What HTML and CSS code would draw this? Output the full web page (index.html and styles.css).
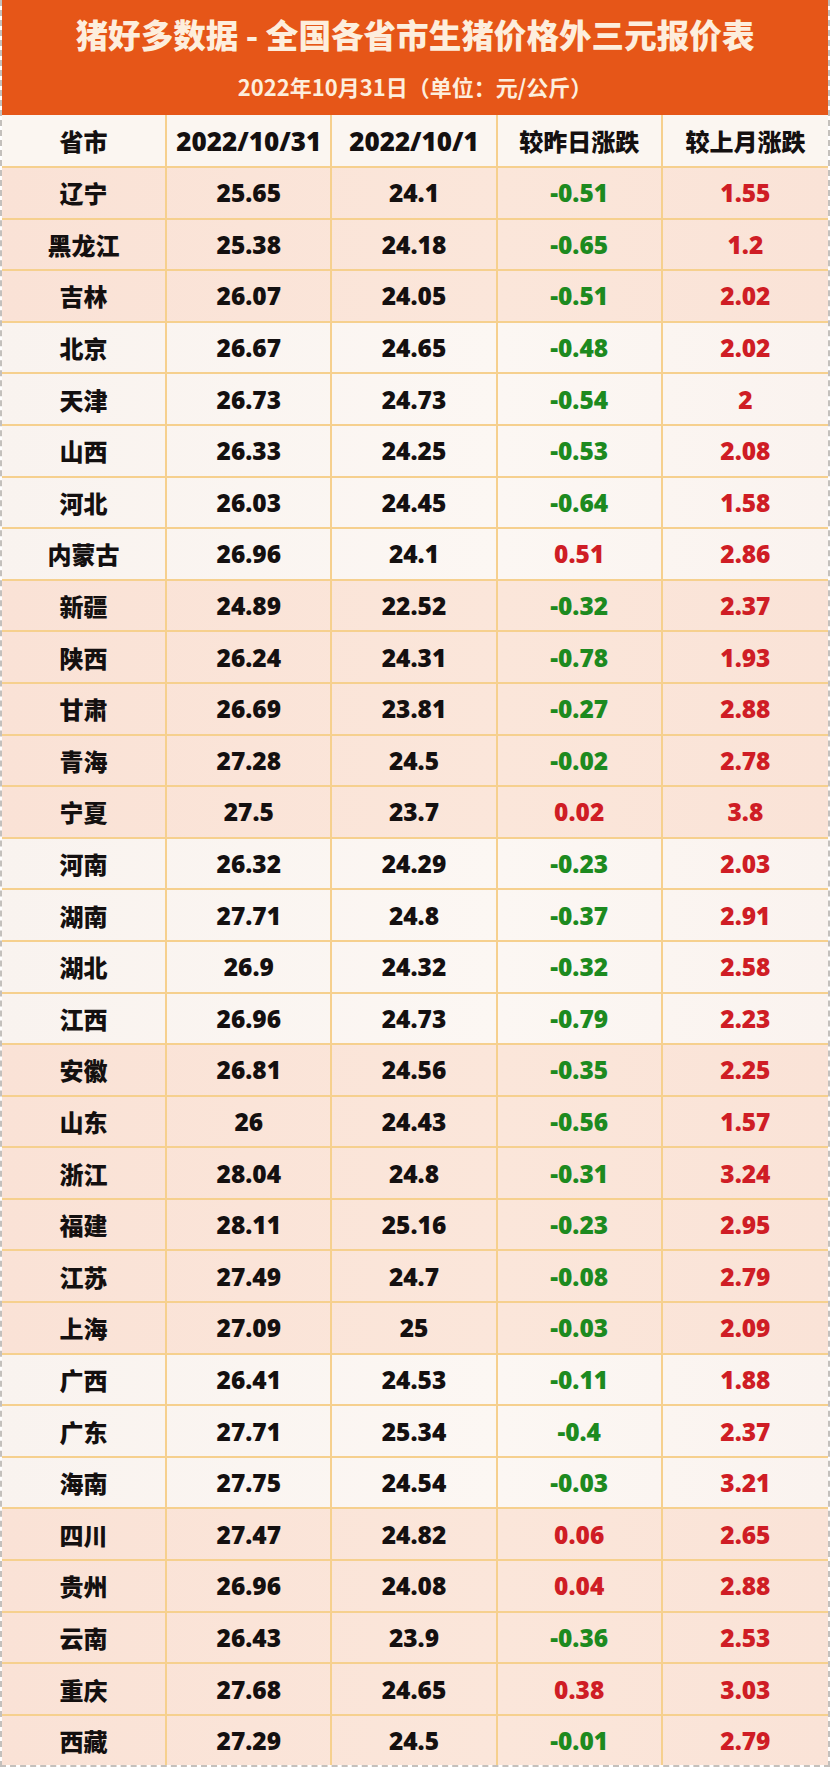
FILE: index.html
```html
<!DOCTYPE html>
<html lang="zh-CN">
<head>
<meta charset="utf-8">
<title>猪好多数据 - 全国各省市生猪价格外三元报价表</title>
<link rel="stylesheet" href="styles.css">
</head>
<body>
<div class="sheet">
  <header class="banner">
    <h1 class="title">猪好多数据 - 全国各省市生猪价格外三元报价表</h1>
    <p class="subtitle">2022年10月31日（单位：元/公斤）</p>
  </header>
  <div class="table">
    <div class="row head">
      <div class="cell">省市</div>
      <div class="cell date">2022/10/31</div>
      <div class="cell date">2022/10/1</div>
      <div class="cell">较昨日涨跌</div>
      <div class="cell">较上月涨跌</div>
    </div>
    <div class="row peach"><div class="cell name">辽宁</div><div class="cell num">25.65</div><div class="cell num">24.1</div><div class="cell num down">-0.51</div><div class="cell num up">1.55</div></div>
    <div class="row peach"><div class="cell name">黑龙江</div><div class="cell num">25.38</div><div class="cell num">24.18</div><div class="cell num down">-0.65</div><div class="cell num up">1.2</div></div>
    <div class="row peach"><div class="cell name">吉林</div><div class="cell num">26.07</div><div class="cell num">24.05</div><div class="cell num down">-0.51</div><div class="cell num up">2.02</div></div>
    <div class="row light"><div class="cell name">北京</div><div class="cell num">26.67</div><div class="cell num">24.65</div><div class="cell num down">-0.48</div><div class="cell num up">2.02</div></div>
    <div class="row light"><div class="cell name">天津</div><div class="cell num">26.73</div><div class="cell num">24.73</div><div class="cell num down">-0.54</div><div class="cell num up">2</div></div>
    <div class="row light"><div class="cell name">山西</div><div class="cell num">26.33</div><div class="cell num">24.25</div><div class="cell num down">-0.53</div><div class="cell num up">2.08</div></div>
    <div class="row light"><div class="cell name">河北</div><div class="cell num">26.03</div><div class="cell num">24.45</div><div class="cell num down">-0.64</div><div class="cell num up">1.58</div></div>
    <div class="row light"><div class="cell name">内蒙古</div><div class="cell num">26.96</div><div class="cell num">24.1</div><div class="cell num up">0.51</div><div class="cell num up">2.86</div></div>
    <div class="row peach"><div class="cell name">新疆</div><div class="cell num">24.89</div><div class="cell num">22.52</div><div class="cell num down">-0.32</div><div class="cell num up">2.37</div></div>
    <div class="row peach"><div class="cell name">陕西</div><div class="cell num">26.24</div><div class="cell num">24.31</div><div class="cell num down">-0.78</div><div class="cell num up">1.93</div></div>
    <div class="row peach"><div class="cell name">甘肃</div><div class="cell num">26.69</div><div class="cell num">23.81</div><div class="cell num down">-0.27</div><div class="cell num up">2.88</div></div>
    <div class="row peach"><div class="cell name">青海</div><div class="cell num">27.28</div><div class="cell num">24.5</div><div class="cell num down">-0.02</div><div class="cell num up">2.78</div></div>
    <div class="row peach"><div class="cell name">宁夏</div><div class="cell num">27.5</div><div class="cell num">23.7</div><div class="cell num up">0.02</div><div class="cell num up">3.8</div></div>
    <div class="row light"><div class="cell name">河南</div><div class="cell num">26.32</div><div class="cell num">24.29</div><div class="cell num down">-0.23</div><div class="cell num up">2.03</div></div>
    <div class="row light"><div class="cell name">湖南</div><div class="cell num">27.71</div><div class="cell num">24.8</div><div class="cell num down">-0.37</div><div class="cell num up">2.91</div></div>
    <div class="row light"><div class="cell name">湖北</div><div class="cell num">26.9</div><div class="cell num">24.32</div><div class="cell num down">-0.32</div><div class="cell num up">2.58</div></div>
    <div class="row light"><div class="cell name">江西</div><div class="cell num">26.96</div><div class="cell num">24.73</div><div class="cell num down">-0.79</div><div class="cell num up">2.23</div></div>
    <div class="row peach"><div class="cell name">安徽</div><div class="cell num">26.81</div><div class="cell num">24.56</div><div class="cell num down">-0.35</div><div class="cell num up">2.25</div></div>
    <div class="row peach"><div class="cell name">山东</div><div class="cell num">26</div><div class="cell num">24.43</div><div class="cell num down">-0.56</div><div class="cell num up">1.57</div></div>
    <div class="row peach"><div class="cell name">浙江</div><div class="cell num">28.04</div><div class="cell num">24.8</div><div class="cell num down">-0.31</div><div class="cell num up">3.24</div></div>
    <div class="row peach"><div class="cell name">福建</div><div class="cell num">28.11</div><div class="cell num">25.16</div><div class="cell num down">-0.23</div><div class="cell num up">2.95</div></div>
    <div class="row peach"><div class="cell name">江苏</div><div class="cell num">27.49</div><div class="cell num">24.7</div><div class="cell num down">-0.08</div><div class="cell num up">2.79</div></div>
    <div class="row peach"><div class="cell name">上海</div><div class="cell num">27.09</div><div class="cell num">25</div><div class="cell num down">-0.03</div><div class="cell num up">2.09</div></div>
    <div class="row light"><div class="cell name">广西</div><div class="cell num">26.41</div><div class="cell num">24.53</div><div class="cell num down">-0.11</div><div class="cell num up">1.88</div></div>
    <div class="row light"><div class="cell name">广东</div><div class="cell num">27.71</div><div class="cell num">25.34</div><div class="cell num down">-0.4</div><div class="cell num up">2.37</div></div>
    <div class="row light"><div class="cell name">海南</div><div class="cell num">27.75</div><div class="cell num">24.54</div><div class="cell num down">-0.03</div><div class="cell num up">3.21</div></div>
    <div class="row peach"><div class="cell name">四川</div><div class="cell num">27.47</div><div class="cell num">24.82</div><div class="cell num up">0.06</div><div class="cell num up">2.65</div></div>
    <div class="row peach"><div class="cell name">贵州</div><div class="cell num">26.96</div><div class="cell num">24.08</div><div class="cell num up">0.04</div><div class="cell num up">2.88</div></div>
    <div class="row peach"><div class="cell name">云南</div><div class="cell num">26.43</div><div class="cell num">23.9</div><div class="cell num down">-0.36</div><div class="cell num up">2.53</div></div>
    <div class="row peach"><div class="cell name">重庆</div><div class="cell num">27.68</div><div class="cell num">24.65</div><div class="cell num up">0.38</div><div class="cell num up">3.03</div></div>
    <div class="row peach"><div class="cell name">西藏</div><div class="cell num">27.29</div><div class="cell num">24.5</div><div class="cell num down">-0.01</div><div class="cell num up">2.79</div></div>
  </div>
</div>
</body>
</html>
```

FILE: styles.css
```css
html, body {
  margin: 0;
  padding: 0;
  background: #ffffff;
}

body {
  font-family: "Open Sans", "Noto Sans CJK SC", sans-serif;
  font-weight: 700;
  color: #141010;
}

.sheet {
  width: 830px;
  box-sizing: border-box;
  border-left: 2px dashed #c4c0bc;
  border-right: 2px dashed #c4c0bc;
  border-bottom: 2px dashed #c4c0bc;
}

.banner {
  height: 115px;
  background: #e65618;
  color: #fdeedd;
  font-family: "Noto Sans CJK SC", sans-serif;
  text-align: center;
  display: flex;
  flex-direction: column;
  align-items: center;
  box-sizing: border-box;
  padding-top: 13px;
}

.title {
  margin: 0;
  font-size: 32.6px;
  line-height: 42px;
  font-weight: 900;
  letter-spacing: 0;
}

.subtitle {
  margin: 16px 0 0;
  font-size: 22px;
  line-height: 30px;
  font-weight: 700;
}

.table {
  display: flex;
  flex-direction: column;
}

.row {
  display: grid;
  grid-template-columns: repeat(5, 1fr);
  height: 51.6px;
  box-sizing: border-box;
  border-bottom: 2px solid #f6d08e;
}

.row:last-child {
  border-bottom: none;
  height: 49.6px;
}

.row.head {
  height: 53px;
  background: #fbf6f1;
}

.row.peach {
  background: linear-gradient(90deg, #fae2d6, #fbe6da 60%, #fae3d7);
}

.row.light {
  background: linear-gradient(90deg, #f9f3ef, #fcf7f3 60%, #faf3ef);
}

.cell {
  display: flex;
  align-items: center;
  justify-content: center;
  border-right: 2px solid #f6d08e;
  font-size: 24px;
  white-space: nowrap;
}

.cell:last-child {
  border-right: none;
}

.head .cell {
  font-family: "Noto Sans CJK SC", sans-serif;
  font-weight: 900;
}

.head .cell.date {
  font-family: "Open Sans", "Noto Sans CJK SC", sans-serif;
  font-size: 26px;
  font-weight: 800;
}

.cell.name {
  font-family: "Noto Sans CJK SC", sans-serif;
  font-size: 24px;
  font-weight: 900;
}

.cell.num {
  font-family: "Open Sans", sans-serif;
  font-size: 24.5px;
  font-weight: 800;
}

.cell.down {
  color: #1d8a1f;
}

.cell.up {
  color: #cf1d25;
}
```
